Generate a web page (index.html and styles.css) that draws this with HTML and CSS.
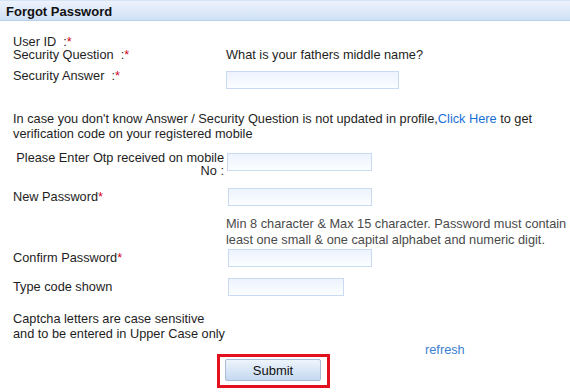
FILE: index.html
```html
<!DOCTYPE html>
<html lang="en">
<head>
    <meta charset="UTF-8" />
    <title>Forgot Password</title>
    <link rel="stylesheet" href="styles.css">
</head>
<body>
    <!-- 비밀번호 찾기 -->
    <div class="panel-head">Forgot Password</div>
    <form id="forgot_form" name="forgot_form" class="forgot-form">
        <div class="row row-userid">
            <span class="label">User ID &nbsp;:<span class="req">*</span></span>
        </div>
        <div class="row row-question">
            <span class="label">Security Question &nbsp;:<span class="req">*</span></span>
            <span class="value">What is your fathers middle name?</span>
        </div>
        <div class="row row-answer">
            <label for="answer" class="label">Security Answer &nbsp;:<span class="req">*</span></label>
            <div class="value"><input type="text" id="answer" name="answer" class="field field-answer" /></div>
        </div>
        <p class="notice">
            In case you don't know Answer / Security Question is not updated in profile,<a href="#" class="link">Click Here</a> to get
            verification code on your registered mobile
        </p>
        <div class="row row-otp">
            <label for="otp" class="label label-right">Please Enter Otp received on mobile<br />No :</label>
            <div class="value"><input type="text" id="otp" name="otp" class="field field-otp" /></div>
        </div>
        <div class="row row-mid row-newpw">
            <label for="new_pw" class="label">New Password<span class="req">*</span></label>
            <div class="value"><input type="password" id="new_pw" name="new_pw" class="field field-pw" /></div>
        </div>
        <div class="row row-help">
            <span class="label"></span>
            <span class="value help">Min 8 character &amp; Max 15 character. Password must contain a<br />least one small &amp; one capital alphabet and numeric digit.</span>
        </div>
        <div class="row row-mid row-confirm">
            <label for="new_pw_re" class="label">Confirm Password<span class="req">*</span></label>
            <div class="value"><input type="password" id="new_pw_re" name="new_pw_re" class="field field-pw" /></div>
        </div>
        <div class="row row-mid row-captcha">
            <label for="captcha" class="label">Type code shown</label>
            <div class="value"><input type="text" id="captcha" name="captcha" class="field field-code" /></div>
        </div>
        <p class="captcha-note">
            Captcha letters are case sensitive<br />and to be entered in Upper Case only
        </p>
        <div class="refresh-line">
            <a href="#" class="link refresh">refresh</a>
        </div>
        <div class="submit-line">
            <div class="submit-box">
                <button type="submit" class="btn-submit">Submit</button>
            </div>
        </div>
    </form>
</body>
</html>
```

FILE: styles.css
```css
html, body {
    margin:0;
    padding:0;
    background:#fff;
}
body {
    width:570px;
    height:392px;
    overflow:hidden;
    font-family:"Liberation Sans", Arial, sans-serif;
    font-size:12.75px;
    color:#1e1e1e;
}
.panel-head {
    box-sizing:border-box;
    height:21px;
    padding:3px 6px 0;
    border-top:1px solid #d7e4f6;
    border-bottom:1px solid #b9cfee;
    background:linear-gradient(#edf3fc, #cfe0f6);
    font-weight:bold;
    font-size:13px;
    line-height:15px;
    color:#111;
}
.forgot-form {
    margin:0;
    padding:0 0 0 13px;
}
.row {
    display:grid;
    grid-template-columns:213px 1fr;
    align-items:start;
    line-height:14px;
}
.row-mid {
    align-items:center;
}
.label {
    display:block;
}
.label-right {
    display:flex;
    flex-direction:column;
    align-items:flex-end;
    padding-right:2px;
    line-height:13px;
    text-align:right;
    white-space:nowrap;
}
.req {
    color:#d0021b;
}
.field {
    box-sizing:border-box;
    display:block;
    height:18px;
    margin:0;
    padding:0 3px;
    border:1px solid #c9dbf2;
    background:linear-gradient(#edf3fd, #fbfdff);
    font-family:inherit;
    font-size:13px;
}
.field-answer {
    width:173px;
}
.field-otp {
    width:145px;
    margin-left:1px;
}
.field-pw {
    width:144px;
    margin-left:2px;
}
.field-code {
    width:116px;
    margin-left:2px;
}
.row-userid {
    margin-top:14px;
    line-height:13px;
}
.row-question {
    line-height:13px;
}
.row-answer {
    margin-top:8px;
}
.row-answer .field {
    margin-top:2px;
}
.notice {
    margin:22px 0 0;
    line-height:15px;
}
.link {
    color:#1a6fd6;
    text-decoration:none;
}
.row-otp {
    margin-top:10px;
}
.row-otp .field {
    margin-top:2px;
}
.row-newpw {
    margin-top:11px;
}
.row-help {
    margin-top:10px;
    line-height:16px;
}
.help {
    color:#4a4a4a;
    white-space:nowrap;
}
.row-confirm {
    margin-top:1px;
}
.row-captcha {
    margin-top:11px;
}
.captcha-note {
    margin:15px 0 0;
    line-height:15px;
}
.refresh-line {
    margin-top:2px;
    padding-left:412px;
    line-height:14px;
}
.refresh {
    color:#3a80d2;
}
.submit-line {
    margin-top:-3px;
    padding-left:204px;
}
.submit-box {
    display:inline-block;
    padding:2px 6px 4px 5px;
    border:3px solid #e3101e;
}
.btn-submit {
    display:block;
    box-sizing:border-box;
    width:96px;
    height:22px;
    margin:0;
    border:1px solid #a9bcd6;
    border-radius:2px;
    background:linear-gradient(#eef4fc, #c5d9f1);
    font-family:inherit;
    font-size:13px;
    color:#111;
}
```
